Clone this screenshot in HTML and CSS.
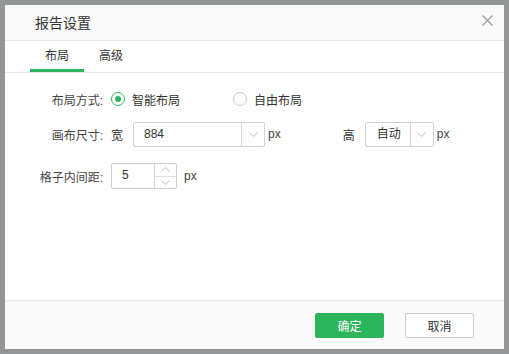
FILE: index.html
```html
<!DOCTYPE html>
<html lang="zh">
<head>
    <meta charset="UTF-8">
    <title>报告设置</title>
    <link rel="stylesheet" href="styles.css">
</head>
<body>
    <div class="dialog">
        <div class="dialog-head">
            <span class="dialog-title">报告设置</span>
            <svg class="close" width="11" height="11" viewBox="0 0 11 11"><path d="M0.5 0.5L10.5 10.5M10.5 0.5L0.5 10.5" stroke="#9a9a9a" stroke-width="1.2" fill="none"/></svg>
        </div>
        <div class="tabs">
            <div class="tab active">布局</div>
            <div class="tab">高级</div>
        </div>
        <div class="form">
            <div class="row row-mode">
                <label class="label">布局方式:</label>
                <div class="radio checked"><span class="dot"></span>智能布局</div>
                <div class="radio"><span class="dot"></span>自由布局</div>
            </div>
            <div class="row row-size">
                <label class="label">画布尺寸:</label>
                <span class="sub">宽</span>
                <div class="select select-w">
                    <span class="value">884</span>
                    <span class="arrow"><svg width="9" height="5" viewBox="0 0 9 5"><path d="M0.5 0.5L4.5 4.5L8.5 0.5" stroke="#bdbdbd" fill="none"/></svg></span>
                </div>
                <span class="unit">px</span>
                <span class="sub sub-h">高</span>
                <div class="select select-h">
                    <span class="value">自动</span>
                    <span class="arrow"><svg width="9" height="5" viewBox="0 0 9 5"><path d="M0.5 0.5L4.5 4.5L8.5 0.5" stroke="#bdbdbd" fill="none"/></svg></span>
                </div>
                <span class="unit">px</span>
            </div>
            <div class="row row-pad">
                <label class="label">格子内间距:</label>
                <div class="spinner">
                    <span class="value">5</span>
                    <span class="spin">
                        <span class="spin-btn"><svg width="9" height="5" viewBox="0 0 9 5"><path d="M0.5 4.5L4.5 0.5L8.5 4.5" stroke="#bdbdbd" fill="none"/></svg></span>
                        <span class="spin-btn"><svg width="9" height="5" viewBox="0 0 9 5"><path d="M0.5 0.5L4.5 4.5L8.5 0.5" stroke="#bdbdbd" fill="none"/></svg></span>
                    </span>
                </div>
                <span class="unit unit-pad">px</span>
            </div>
        </div>
        <div class="dialog-foot">
            <button class="btn btn-primary">确定</button>
            <button class="btn">取消</button>
        </div>
    </div>
</body>
</html>
```

FILE: styles.css
```css
* {
    margin: 0;
    padding: 0;
    box-sizing: border-box;
}
body {
    background-color: #939697;
    padding: 5px;
    font-family: 'Liberation Sans', 'Noto Sans CJK SC', sans-serif;
    font-size: 12px;
    color: #333;
}
.dialog {
    width: 499px;
    height: 344px;
    background-color: #fff;
    display: flex;
    flex-direction: column;
}
.dialog-head {
    height: 36px;
    background-color: #fafafa;
    border-bottom: 1px solid #e8e8e8;
    display: flex;
    align-items: center;
    justify-content: space-between;
    padding: 0 11px 0 30px;
}
.dialog-title {
    font-size: 14px;
    color: #333;
    margin-top: -2px;
}
.close {
    margin-top: -4px;
}
.tabs {
    height: 32px;
    border-bottom: 1px solid #e8e8e8;
    display: flex;
    padding-left: 25px;
}
.tab {
    width: 54px;
    text-align: center;
    padding-top: 2px;
    line-height: 26px;
    color: #333;
    border-bottom: 3px solid transparent;
}
.tab.active {
    border-bottom-color: #2db55d;
}
.form {
    flex: 1;
    padding-top: 13px;
}
.row {
    display: flex;
    align-items: center;
    height: 26px;
}
.row-size {
    margin-top: 9px;
}
.row-pad {
    margin-top: 16px;
}
.label {
    width: 98px;
    text-align: right;
    margin-right: 8px;
    color: #444;
}
.radio {
    width: 122px;
    display: flex;
    align-items: center;
    gap: 7px;
}
.radio .dot {
    width: 14px;
    height: 14px;
    border: 1px solid #ccc;
    border-radius: 50%;
    display: flex;
    align-items: center;
    justify-content: center;
}
.radio.checked .dot {
    border-color: #2db55d;
}
.radio.checked .dot::after {
    content: '';
    width: 6px;
    height: 6px;
    border-radius: 50%;
    background-color: #2db55d;
}
.sub {
    margin-right: 10px;
}
.sub-h {
    margin-left: 62px;
}
.select,
.spinner {
    height: 25px;
    border: 1px solid #d0d0d0;
    border-radius: 2px;
    display: flex;
}
.select-w {
    width: 132px;
}
.select-h {
    width: 69px;
}
.value {
    flex: 1;
    padding-left: 10px;
    line-height: 23px;
    color: #333;
}
.select-h .value {
    padding-left: 11px;
}
.arrow {
    width: 23px;
    border-left: 1px solid #d8d8d8;
    display: flex;
    align-items: center;
    justify-content: center;
}
.unit {
    margin-left: 3px;
    color: #444;
}
.spinner {
    width: 66px;
    height: 26px;
}
.spin {
    width: 22px;
    border-left: 1px solid #d8d8d8;
    display: flex;
    flex-direction: column;
}
.spin-btn {
    flex: 1;
    display: flex;
    align-items: center;
    justify-content: center;
}
.spin-btn + .spin-btn {
    border-top: 1px solid #e2e2e2;
}
.unit-pad {
    margin-left: 7px;
}
.dialog-foot {
    height: 49px;
    background-color: #fafafa;
    border-top: 1px solid #e8e8e8;
    display: flex;
    justify-content: flex-end;
    align-items: center;
    gap: 21px;
    padding-right: 30px;
}
.btn {
    width: 69px;
    height: 25px;
    border: 1px solid #ccc;
    border-radius: 2px;
    background-color: #fff;
    color: #333;
    font-family: inherit;
    font-size: 12px;
    cursor: pointer;
}
.btn-primary {
    background-color: #2db55d;
    border-color: #2db55d;
    color: #fff;
}
```
